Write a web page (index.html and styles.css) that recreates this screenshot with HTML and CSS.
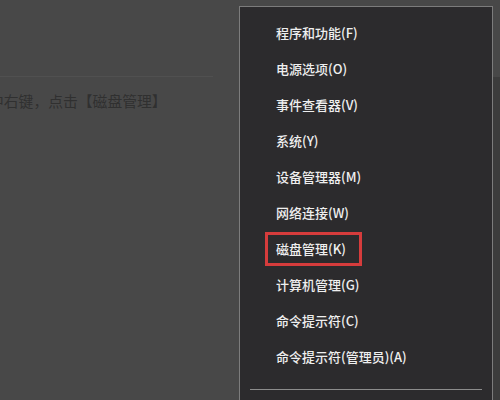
FILE: index.html
```html
<!DOCTYPE html>
<html>
<head>
<meta charset="utf-8">
<link rel="stylesheet" href="styles.css">
</head>
<body>
<div class="screen">
  <div class="page">
    <div class="rule"></div>
    <p class="step">中右键，点击【磁盘管理】</p>
  </div>
  <div class="menu">
    <ul class="items">
      <li>程序和功能(F)</li>
      <li>电源选项(O)</li>
      <li>事件查看器(V)</li>
      <li>系统(Y)</li>
      <li>设备管理器(M)</li>
      <li>网络连接(W)</li>
      <li><span class="mark">磁盘管理(K)</span></li>
      <li>计算机管理(G)</li>
      <li>命令提示符(C)</li>
      <li>命令提示符(管理员)(A)</li>
    </ul>
    <div class="sep"></div>
    <ul class="items more">
      <li>任务管理器(T)</li>
    </ul>
  </div>
  <div class="edge">
    <div class="edge-top"></div>
    <div class="edge-rest"></div>
  </div>
</div>
</body>
</html>
```
FILE: styles.css
```css
html, body {
  margin: 0;
  padding: 0;
  width: 500px;
  height: 400px;
  overflow: hidden;
  background: #484848;
  font-family: "Noto Sans CJK SC", "Noto Sans", sans-serif;
}
.screen {
  display: flex;
  width: 500px;
  height: 400px;
}
.page {
  width: 239px;
  flex: none;
  overflow: hidden;
  padding-top: 76px;
}
.rule {
  width: 213px;
  height: 1px;
  background: #505050;
}
.step {
  margin: 14px 0 0 -11px;
  font-size: 14.8px;
  line-height: 20px;
  color: #303030;
  white-space: nowrap;
}
.menu {
  width: 252px;
  flex: none;
  margin-top: 6px;
  background: #2c2b2d;
  border: 1px solid #7c7c7c;
  border-bottom: none;
  overflow: hidden;
}
.items {
  list-style: none;
  margin: 0;
  padding: 8px 0 0 36px;
}
.items li {
  height: 36px;
  line-height: 36px;
  font-size: 13px;
  font-weight: 500;
  color: #efefef;
  white-space: nowrap;
}
.mark {
  display: inline-block;
  margin-left: -11px;
  height: 28px;
  line-height: 28px;
  padding: 0 13px 0 8px;
  border: 3px solid #d63c3c;
  vertical-align: top;
  margin-top: 1px;
}
.sep {
  margin: 14px 10px 0 10px;
  height: 1px;
  background: #8c8c8c;
}
.items.more {
  padding-top: 0;
}
.items.more li {
  line-height: 36px;
  color: #bdbdbd;
}
.edge {
  flex: 1;
  display: flex;
  flex-direction: column;
}
.edge-top {
  height: 77px;
  background: #484848;
}
.edge-rest {
  flex: 1;
  background: #3c3c3c;
}
```
